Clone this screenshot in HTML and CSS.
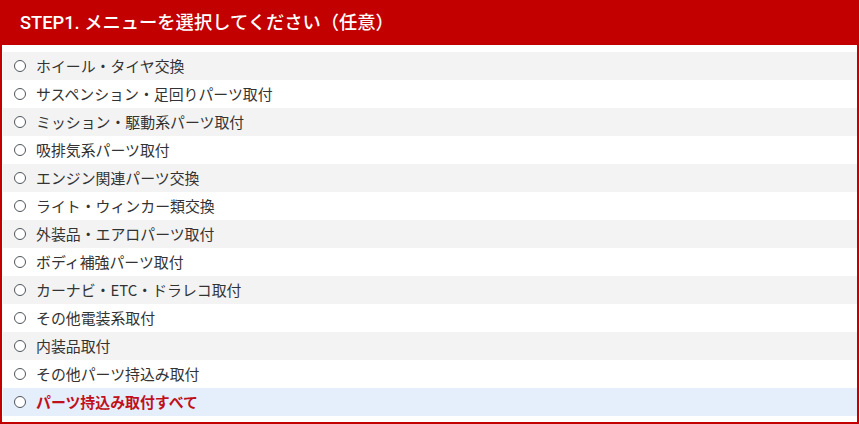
FILE: index.html
```html
<!DOCTYPE html>
<html lang="ja">
<head>
<meta charset="utf-8">
<link rel="stylesheet" href="styles.css">
</head>
<body>
<section class="step">
  <h2 class="step-title">STEP1. メニューを選択してください（任意）</h2>
  <ul class="menu">
    <li class="item odd"><span class="radio"></span><span class="label">ホイール・タイヤ交換</span></li>
    <li class="item"><span class="radio"></span><span class="label">サスペンション・足回りパーツ取付</span></li>
    <li class="item odd"><span class="radio"></span><span class="label">ミッション・駆動系パーツ取付</span></li>
    <li class="item"><span class="radio"></span><span class="label">吸排気系パーツ取付</span></li>
    <li class="item odd"><span class="radio"></span><span class="label">エンジン関連パーツ交換</span></li>
    <li class="item"><span class="radio"></span><span class="label">ライト・ウィンカー類交換</span></li>
    <li class="item odd"><span class="radio"></span><span class="label">外装品・エアロパーツ取付</span></li>
    <li class="item"><span class="radio"></span><span class="label">ボディ補強パーツ取付</span></li>
    <li class="item odd"><span class="radio"></span><span class="label">カーナビ・ETC・ドラレコ取付</span></li>
    <li class="item"><span class="radio"></span><span class="label">その他電装系取付</span></li>
    <li class="item odd"><span class="radio"></span><span class="label">内装品取付</span></li>
    <li class="item"><span class="radio"></span><span class="label">その他パーツ持込み取付</span></li>
    <li class="item all"><span class="radio"></span><span class="label">パーツ持込み取付すべて</span></li>
  </ul>
</section>
</body>
</html>
```

FILE: styles.css
```css
* { box-sizing: border-box; }
html, body {
  margin: 0;
  padding: 0;
  background: #ffffff;
}
body {
  font-family: Roboto, "Noto Sans CJK JP", sans-serif;
  width: 860px;
  height: 424px;
  overflow: hidden;
}
.step {
  width: 859px;
}
.step-title {
  margin: 0;
  height: 45px;
  background: #c20000;
  color: #ffffff;
  font-size: 18.3px;
  font-weight: 500;
  line-height: 45px;
  padding-left: 20px;
  letter-spacing: 0;
}
.menu {
  list-style: none;
  margin: 0;
  padding: 7px 0 6px 1px;
  border: 2px solid #c20000;
  border-top: none;
}
.item {
  display: flex;
  align-items: center;
  height: 28px;
  padding-left: 11px;
  font-family: "Noto Sans CJK JP", sans-serif;
  font-size: 14.9px;
  color: #333333;
}
.item.odd { background: #f3f3f3; }
.item.all { background: #e5effc; }
.item.all .label {
  color: #c0111b;
  font-weight: 700;
}
.radio {
  width: 12px;
  height: 12px;
  border: 1.6px solid #50555b;
  border-radius: 50%;
  background: #ffffff;
  margin-right: 10px;
  flex: none;
}
.label {
  line-height: 1;
}
```
